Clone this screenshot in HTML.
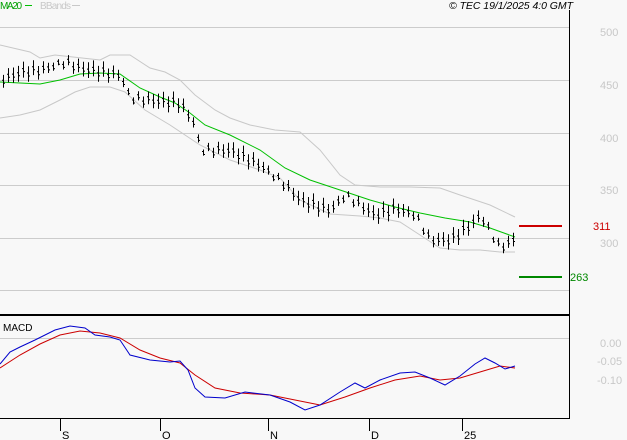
<!DOCTYPE html>
<html><head><style>
body{margin:0;background:#f8f8f8;width:627px;height:440px;overflow:hidden}
svg{display:block}
text{font-family:"Liberation Sans",sans-serif}
</style></head><body>
<svg width="627" height="440" xmlns="http://www.w3.org/2000/svg">
<rect width="627" height="440" fill="#f8f8f8"/>
<g stroke="#cccccc" stroke-width="1">
<line x1="0" y1="27.5" x2="569" y2="27.5"/>
<line x1="0" y1="80.5" x2="569" y2="80.5"/>
<line x1="0" y1="133.5" x2="569" y2="133.5"/>
<line x1="0" y1="185.5" x2="569" y2="185.5"/>
<line x1="0" y1="238.5" x2="569" y2="238.5"/>
<line x1="0" y1="290.5" x2="569" y2="290.5"/>
<line x1="0" y1="338.5" x2="569" y2="338.5"/>
</g>
<g font-size="11" fill="#c8c8c8">
<text x="600" y="36">500</text><text x="600" y="89">450</text><text x="600" y="142">400</text>
<text x="600" y="194">350</text><text x="600" y="247">300</text>
<text x="600" y="347">0.00</text><text x="597" y="365">-0.05</text><text x="597" y="384">-0.10</text>
</g>
<text x="0" y="9" font-size="10" fill="#00a000" textLength="22">MA20</text>
<line x1="25" y1="5.5" x2="32" y2="5.5" stroke="#00c000"/>
<text x="40" y="9" font-size="10" fill="#c8c8c8" textLength="31">BBands</text>
<line x1="72" y1="5.5" x2="80" y2="5.5" stroke="#c8c8c8"/>
<text x="449" y="9" font-size="10.5" font-style="italic" fill="#000" textLength="124">© TEC 19/1/2025 4:0 GMT</text>
<polyline fill="none" stroke="#c8c8c8" points="0,45 30,52 40,58 55,55 100,60 110,55 130,55 150,68 165,72 180,80 195,95 215,110 230,118 250,125 275,130 300,132 320,150 340,175 355,185 380,187 410,187 440,188 460,195 490,205 515,217"/>
<polyline fill="none" stroke="#c8c8c8" points="0,118 20,115 40,110 60,100 75,92 90,87 110,87 125,92 145,110 170,125 200,145 230,160 260,170 280,178 300,200 330,214 360,216 380,218 400,222 420,235 440,248 460,250 480,250 500,252 515,252"/>
<polyline fill="none" stroke="#00c000" points="0,82 20,83 40,84 60,80 80,74 100,73 120,74 140,88 160,97 175,103 190,113 205,125 230,135 260,150 285,168 310,180 340,190 370,200 395,207 420,213 445,218 470,222 490,228 515,237"/>
<g id="bars" stroke="#000" stroke-width="1"></g>
<line x1="519" y1="226" x2="562" y2="226" stroke="#cc0000" stroke-width="2"/>
<line x1="519" y1="277" x2="562" y2="277" stroke="#008800" stroke-width="2"/>
<text x="593" y="230" font-size="11" fill="#cc0000">311</text>
<text x="570" y="281" font-size="11" fill="#008800">263</text>
<line x1="569.5" y1="10" x2="569.5" y2="419" stroke="#000"/>
<line x1="0" y1="315" x2="570" y2="315" stroke="#000" stroke-width="2"/>
<line x1="0" y1="418.5" x2="570" y2="418.5" stroke="#000"/>
<text x="3" y="331" font-size="10" fill="#000">MACD</text>
<polyline fill="none" stroke="#cc0000" points="0,368 20,355 40,344 60,335 80,331 100,333 120,338 140,350 160,358 180,363 195,375 215,388 240,393 270,395 295,400 320,405 345,397 370,388 395,380 420,376 440,380 460,378 480,372 500,366 515,368"/>
<polyline fill="none" stroke="#0000cc" points="0,364 10,352 20,347 35,340 55,330 70,326 85,328 95,335 110,337 120,340 130,355 150,360 170,362 180,361 188,370 195,388 205,397 225,398 245,392 270,395 290,402 305,410 320,405 340,392 355,383 365,388 380,380 400,373 415,372 430,378 445,385 460,376 475,364 485,358 495,363 505,369 515,366"/>
<g stroke="#000"><line x1="60.5" y1="419" x2="60.5" y2="431"/><line x1="160.5" y1="419" x2="160.5" y2="431"/><line x1="268.5" y1="419" x2="268.5" y2="431"/><line x1="369.5" y1="419" x2="369.5" y2="431"/><line x1="462.5" y1="419" x2="462.5" y2="431"/></g>
<g font-size="11" fill="#000"><text x="62" y="439">S</text><text x="162" y="439">O</text><text x="270" y="439">N</text><text x="371" y="439">D</text><text x="464" y="439">25</text></g>
</svg>
<script>
var pts=[[0,80],[20,72],[40,70],[65,62],[80,68],[120,75],[130,98],[150,100],[180,103],[195,125],[200,150],[230,150],[260,165],[285,185],[300,200],[330,210],[345,195],[360,205],[375,215],[395,208],[415,215],[430,240],[450,240],[470,225],[480,215],[490,232],[500,248],[512,240]];
function f(x){for(var i=0;i<pts.length-1;i++){if(x>=pts[i][0]&&x<=pts[i+1][0]){var t=(x-pts[i][0])/(pts[i+1][0]-pts[i][0]);return pts[i][1]+t*(pts[i+1][1]-pts[i][1]);}}return pts[pts.length-1][1];}
var d="";var s=7;
for(var x=3;x<=513;x+=5){var y=f(x)+Math.sin(x*s)*3;var h=6+Math.abs(Math.sin(x*1.3))*10;var a=y-h/2,b=y+h/2;
d+="M"+(x+.5)+" "+a.toFixed(1)+"V"+b.toFixed(1)+"M"+(x-1)+" "+(y-1).toFixed(1)+"H"+x+"M"+(x+1)+" "+(y+2).toFixed(1)+"H"+(x+2);}
var p=document.createElementNS("http://www.w3.org/2000/svg","path");p.setAttribute("d",d);p.setAttribute("fill","none");
document.getElementById("bars").appendChild(p);
</script>
</body></html>
